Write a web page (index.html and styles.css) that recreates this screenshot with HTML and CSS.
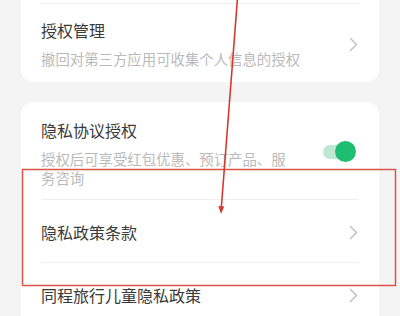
FILE: index.html
```html
<!DOCTYPE html>
<html lang="zh-CN">
<head>
<meta charset="utf-8">
<link rel="stylesheet" href="styles.css">
</head>
<body>
<div class="page">
  <section class="card card-top">
    <div class="divider"></div>
    <div class="row row-sub row-first">
      <div class="text">
        <div class="title">授权管理</div>
        <div class="sub">撤回对第三方应用可收集个人信息的授权</div>
      </div>
      <svg class="chev" width="9" height="15" viewBox="0 0 9 15"><polyline points="1.5,1.5 7.5,7.5 1.5,13.5" fill="none" stroke="#bdbdbd" stroke-width="1.4" stroke-linecap="round" stroke-linejoin="round"/></svg>
    </div>
  </section>

  <section class="card card-mid">
    <div class="row row-sub row-toggle">
      <div class="text">
        <div class="title">隐私协议授权</div>
        <div class="sub sub-wrap">授权后可享受红包优惠、预订产品、服务咨询</div>
      </div>
      <div class="toggle"><span class="track"></span><span class="knob"></span></div>
    </div>
    <div class="divider"></div>
    <div class="row row-link">
      <div class="title">隐私政策条款</div>
      <svg class="chev" width="9" height="15" viewBox="0 0 9 15"><polyline points="1.5,1.5 7.5,7.5 1.5,13.5" fill="none" stroke="#bdbdbd" stroke-width="1.4" stroke-linecap="round" stroke-linejoin="round"/></svg>
    </div>
    <div class="divider"></div>
    <div class="row row-link">
      <div class="title">同程旅行儿童隐私政策</div>
      <svg class="chev" width="9" height="15" viewBox="0 0 9 15"><polyline points="1.5,1.5 7.5,7.5 1.5,13.5" fill="none" stroke="#bdbdbd" stroke-width="1.4" stroke-linecap="round" stroke-linejoin="round"/></svg>
    </div>
  </section>

  <svg class="annot" width="400" height="316" viewBox="0 0 400 316">
    <rect x="22.5" y="169.5" width="373" height="116" fill="none" stroke="#d9534a" stroke-width="1.5"/>
    <line x1="237.5" y1="-2" x2="221.3" y2="208" stroke="#d23a30" stroke-width="1.6"/>
    <polygon points="218.3,206 224.3,206.5 221,214" fill="#d23a30"/>
  </svg>
</div>
</body>
</html>
```

FILE: styles.css
```css
html, body {
  margin: 0;
  padding: 0;
}
body {
  background: #f4f4f4;
  font-family: "Noto Sans CJK SC", "Noto Sans", sans-serif;
}
.page {
  position: relative;
  width: 400px;
  height: 316px;
  overflow: hidden;
}
.card {
  background: #ffffff;
  margin: 0 21px;
}
.card-top {
  padding-top: 3px;
  border-radius: 0 0 12px 12px;
}
.card-mid {
  margin-top: 20px;
  border-radius: 12px 12px 0 0;
}
.divider {
  height: 1px;
  margin: 0 20px;
  background: #efefef;
}
.row {
  display: flex;
  align-items: center;
  padding-left: 20px;
  padding-right: 22px;
}
.text {
  flex: 1;
  min-width: 0;
}
.title {
  flex: 1;
  font-size: 16px;
  line-height: 22px;
  color: #3a3a3a;
}
.sub {
  margin-top: 8px;
  font-size: 14.4px;
  line-height: 20px;
  color: #bababa;
  white-space: nowrap;
}
.sub-wrap {
  white-space: normal;
  width: 252px;
  line-height: 19px;
}
.row-first {
  padding-top: 15px;
  padding-bottom: 13px;
}
.row-toggle {
  padding-top: 17px;
  padding-bottom: 12px;
}
.row-link {
  padding-top: 21px;
  padding-bottom: 19px;
}
.chev {
  display: block;
  flex: none;
  margin-right: -1px;
}
.toggle {
  position: relative;
  flex: none;
  width: 34px;
  height: 22px;
  margin-right: 1px;
  margin-top: -2px;
}
.track {
  position: absolute;
  left: 1px;
  top: 4px;
  width: 29px;
  height: 14px;
  border-radius: 7px;
  background: #bfe8d2;
}
.knob {
  position: absolute;
  right: 0;
  top: 0;
  width: 21px;
  height: 21px;
  border-radius: 50%;
  background: #1dbd72;
}
.annot {
  position: absolute;
  left: 0;
  top: 0;
  pointer-events: none;
}
```
